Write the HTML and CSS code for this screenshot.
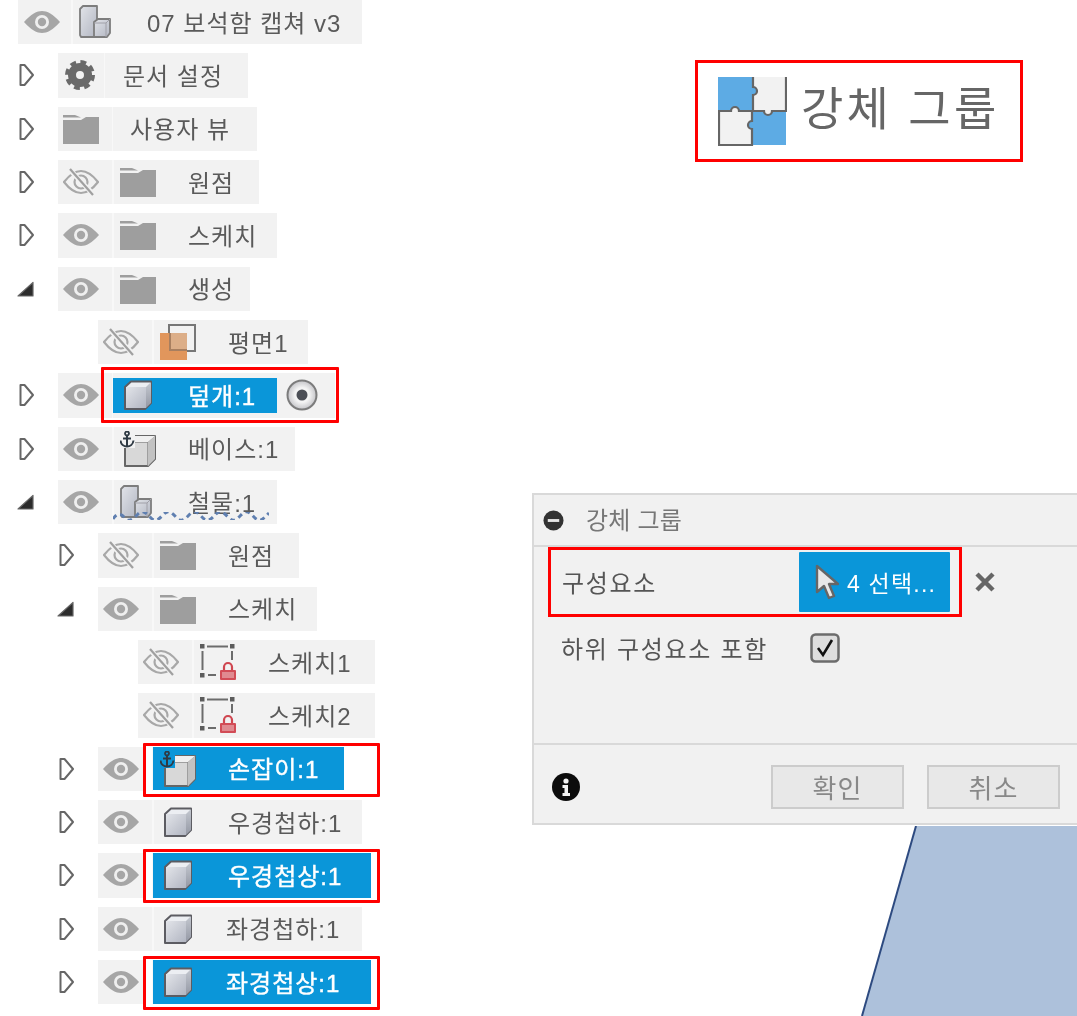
FILE: index.html
```html
<!DOCTYPE html>
<html lang="ko">
<head>
<meta charset="utf-8">
<title>강체 그룹</title>
<link rel="stylesheet" href="styles.css">
</head>
<body>
<svg class="defs" aria-hidden="true">
  <defs>
    <linearGradient id="gFront" x1="0" y1="0" x2="1" y2="1"><stop offset="0" stop-color="#e2e4e9"/><stop offset="1" stop-color="#b2b6c2"/></linearGradient>
    <linearGradient id="gSide" x1="0" y1="0" x2="0" y2="1"><stop offset="0" stop-color="#c4c8d0"/><stop offset="1" stop-color="#9498a4"/></linearGradient>
    <radialGradient id="gRadio"><stop offset="0.5" stop-color="#f4f4f4"/><stop offset="1" stop-color="#c4c4c8"/></radialGradient>
    <symbol id="eye" viewBox="0 0 36 22"><path d="M0 11C7 3 13 0 18 0s11 3 18 11C29 19 23 22 18 22S7 19 0 11Z" fill="#a6a6a6"/><circle cx="18" cy="11" r="7" fill="#efefef"/><circle cx="18" cy="11" r="4.200" fill="#a6a6a6"/></symbol>
    <symbol id="eyeoff" viewBox="0 0 36 28"><path d="M1 14C8 5 13 3 18 3s10 2 17 11C28 23 23 25 18 25S8 23 1 14Z" fill="none" stroke="#a8a8a8" stroke-width="2.200"/><circle cx="18" cy="14" r="6.500" fill="none" stroke="#a8a8a8" stroke-width="2.200"/><path d="M6 1 31 27" stroke="#f2f2f2" stroke-width="5"/><path d="M7 1 30 27" stroke="#a0a0a0" stroke-width="2.200"/></symbol>
    <symbol id="folder" viewBox="0 0 36 30"><path d="M0 1H12L18 3.500H0Z" fill="#9e9e9e"/><path d="M0 6H18L23 3H36V30H0Z" fill="#9e9e9e"/></symbol>
    <symbol id="gear" viewBox="0 0 30 30"><circle cx="15" cy="15" r="8" fill="none" stroke="#6a6a6a" stroke-width="8"/><circle cx="15" cy="15" r="12.500" fill="none" stroke="#6a6a6a" stroke-width="5" stroke-dasharray="5.600 4.220"/></symbol>
    <symbol id="cube" viewBox="0 0 30 30"><path d="M2 7 8 1.500H28V23L22 29H2Z" fill="#eceef2" stroke="#5c5c62" stroke-width="2" stroke-linejoin="round"/><path d="M23 7 28 2V23L23 28Z" fill="url(#gSide)"/><path d="M3 7H23V28H3Z" fill="url(#gFront)"/></symbol>
    <symbol id="anchorcube" viewBox="0 0 36 36"><path d="M5 10 11 5H35V28L28 35H5Z" fill="#d8d8d8" stroke="#666" stroke-width="2" stroke-linejoin="round"/><path d="M5 11H28L35 5M28 11V35" fill="none" stroke="#8c8c8c" stroke-width="1.500"/><path d="M11 5H35L28 11H5Z" fill="#f0f0f0"/><path d="M28 11 35 5V28L28 35Z" fill="#c2c2c2"/><rect class="anchorbg" x="0" y="0" width="15" height="17"/><circle cx="7" cy="2.500" r="2" fill="none" stroke="#2f3a44" stroke-width="1.800"/><path d="M7 4.500V15M3 7.500H11M0.500 9.500C1 13.500 4 15.500 7 15.500S13 13.500 13.500 9.500" fill="none" stroke="#2f3a44" stroke-width="2"/></symbol>
    <symbol id="bodies" viewBox="0 0 32 34"><path d="M1 4 4 1H18V32H2L1 30Z" fill="url(#gFront)" stroke="#7d7d7d" stroke-width="1.800" stroke-linejoin="round"/><path d="M15 17 19 14H31V28L28 32H15Z" fill="url(#gFront)" stroke="#7d7d7d" stroke-width="1.800" stroke-linejoin="round"/><path d="M15 18H27V32M27 18 31 14" fill="none" stroke="#a0a0a8" stroke-width="1"/></symbol>
    <symbol id="plane" viewBox="0 0 36 36"><path d="M9 9V1H35V27H27" fill="none" stroke="#777" stroke-width="2"/><rect x="0" y="9" width="27" height="27" fill="#e1965c"/><rect x="9" y="9" width="18" height="18" fill="#dcae88"/><path d="M10 9V26H27" fill="none" stroke="#a87f60" stroke-width="2"/></symbol>
    <symbol id="sketch" viewBox="0 0 36 36"><g fill="#5c5c5c"><rect x="0" y="0" width="4.500" height="4.500"/><rect x="30" y="0" width="4.500" height="4.500"/><rect x="0" y="29" width="4.500" height="4.500"/></g><path d="M7 2.500H28M2.500 7V26M32 7V16M8 31H16" stroke="#6c6c6c" stroke-width="2" fill="none"/><path d="M24 26V23a4 4 0 0 1 8 0V26" fill="none" stroke="#cf4650" stroke-width="2.200"/><rect x="20" y="26" width="16" height="10" rx="1" fill="#d24c56"/><rect x="22" y="28" width="12" height="6" fill="#e08a90"/></symbol>
    <symbol id="puzzle" viewBox="0 0 69 69"><rect x="0" y="0" width="68" height="68" fill="#f2f2f2"/><path d="M0 0H35V10a4 4 0 0 1 0 8V34H21a4 4 0 0 0-8 0H0Z" fill="#5dabe4"/><path d="M34 34H46a4 4 0 0 0 8 0H68V68H34V52a4 4 0 0 1 0-8Z" fill="#5dabe4"/><path d="M35 0V10a4 4 0 0 1 0 8V34H21a4 4 0 0 0-8 0H0M68 0V34H54a4 4 0 0 1-8 0H34V44a4 4 0 0 0 0 8V68H1V34" fill="none" stroke="#666" stroke-width="2.200"/></symbol>
    <symbol id="radio" viewBox="0 0 32 32"><circle cx="16" cy="16" r="14.500" fill="url(#gRadio)" stroke="#7c7c7c" stroke-width="2"/><circle cx="16" cy="16" r="5.500" fill="#4c4f56"/></symbol>
    <symbol id="closed" viewBox="0 0 16 24"><path d="M1.500 2H5.500L14 12 5.500 22H1.500Z" fill="#fff" stroke="#666" stroke-width="2" stroke-linejoin="round"/></symbol>
    <symbol id="open" viewBox="0 0 18 16"><path d="M1 15 16 1.500V15Z" fill="#2c2c2c" stroke="#666" stroke-width="1.200" stroke-linejoin="round"/></symbol>
    <symbol id="cursor" viewBox="0 0 24 36"><path d="M2 2V28L9 22 14 34 19 32 14 20H23Z" fill="#e8e8e8" stroke="#666" stroke-width="2.400" stroke-linejoin="round"/></symbol>
    <symbol id="cross" viewBox="0 0 22 20"><path d="M3 2 19 18M19 2 3 18" stroke="#666" stroke-width="4.500"/></symbol>
    <symbol id="minus" viewBox="0 0 22 22"><circle cx="11" cy="11" r="10.500" fill="#333"/><rect x="5" y="9.500" width="12" height="3" fill="#e8e8e8"/></symbol>
    <symbol id="info" viewBox="0 0 28 28"><circle cx="14" cy="14" r="14" fill="#0c0c0c"/><circle cx="14" cy="8" r="2.600" fill="#f2f2f2"/><path d="M10.500 12H16V20H18V23H10.500V20H12.500V15H10.500Z" fill="#f2f2f2"/></symbol>
    <symbol id="check" viewBox="0 0 30 30"><rect x="1.500" y="1.500" width="27" height="27" rx="4" fill="#dedede" stroke="#6c6c6c" stroke-width="2.500"/><path d="M8 15 13 22 22 7" fill="none" stroke="#111" stroke-width="2.600"/></symbol>
  </defs>
</svg>

<main class="page">
  <section class="tree">
    <div class="row">
      <div class="chip w-root"><span class="cell eye-cell root-eye"><svg class="i-eye"><use href="#eye"/></svg></span><span class="cell icon-cell"><svg class="i-body"><use href="#bodies"/></svg></span><span class="label">07 보석함 캡쳐 v3</span></div>
    </div>
    <div class="row">
      <span class="slot"><svg class="i-closed"><use href="#closed"/></svg></span>
      <div class="chip w-doc"><span class="cell gear-cell"><svg class="i-gear"><use href="#gear"/></svg></span><span class="label">문서 설정</span></div>
    </div>
    <div class="row">
      <span class="slot"><svg class="i-closed"><use href="#closed"/></svg></span>
      <div class="chip w-view"><span class="cell view-cell"><svg class="i-folder"><use href="#folder"/></svg></span><span class="label">사용자 뷰</span></div>
    </div>
    <div class="row">
      <span class="slot"><svg class="i-closed"><use href="#closed"/></svg></span>
      <div class="chip w-origin"><span class="cell eye-cell"><svg class="i-off"><use href="#eyeoff"/></svg></span><span class="cell icon-cell"><svg class="i-folder"><use href="#folder"/></svg></span><span class="label">원점</span></div>
    </div>
    <div class="row">
      <span class="slot"><svg class="i-closed"><use href="#closed"/></svg></span>
      <div class="chip w-sketch"><span class="cell eye-cell"><svg class="i-eye"><use href="#eye"/></svg></span><span class="cell icon-cell"><svg class="i-folder"><use href="#folder"/></svg></span><span class="label">스케치</span></div>
    </div>
    <div class="row">
      <span class="slot"><svg class="i-open"><use href="#open"/></svg></span>
      <div class="chip w-make"><span class="cell eye-cell"><svg class="i-eye"><use href="#eye"/></svg></span><span class="cell icon-cell"><svg class="i-folder"><use href="#folder"/></svg></span><span class="label">생성</span></div>
    </div>
    <div class="row l2">
      <span class="slot"></span>
      <div class="chip w-plane"><span class="cell eye-cell"><svg class="i-off"><use href="#eyeoff"/></svg></span><span class="cell icon-cell"><svg class="i-plane"><use href="#plane"/></svg></span><span class="label">평면1</span></div>
    </div>
    <div class="row">
      <span class="slot"><svg class="i-closed"><use href="#closed"/></svg></span>
      <div class="chip w-cover"><span class="cell eye-cell"><svg class="i-eye"><use href="#eye"/></svg></span><span class="sel sel-cover"><span class="cube-cell"><svg class="i-cube"><use href="#cube"/></svg></span><span class="label">덮개:1</span></span><svg class="i-radio"><use href="#radio"/></svg></div>
      <span class="mark mark-cover"></span>
    </div>
    <div class="row">
      <span class="slot"><svg class="i-closed"><use href="#closed"/></svg></span>
      <div class="chip w-base"><span class="cell eye-cell"><svg class="i-eye"><use href="#eye"/></svg></span><span class="cell icon-cell"><svg class="i-anchor"><use href="#anchorcube"/></svg></span><span class="label">베이스:1</span></div>
    </div>
    <div class="row">
      <span class="slot"><svg class="i-open"><use href="#open"/></svg></span>
      <div class="chip w-sketch"><span class="cell eye-cell"><svg class="i-eye"><use href="#eye"/></svg></span><span class="cell icon-cell"><svg class="i-body"><use href="#bodies"/></svg></span><span class="label">철물:1</span></div>
      <svg class="wave" viewBox="0 0 156 8"><path d="M0 7C4 1 8 1 12 6S20 7 25 2 33 1 38 6 46 7 51 2 59 1 64 6 72 7 77 2 85 1 90 6 98 7 103 2 111 1 116 6 124 7 129 2 137 1 142 6 150 7 156 1"/></svg>
    </div>
    <div class="row l1">
      <span class="slot"><svg class="i-closed"><use href="#closed"/></svg></span>
      <div class="chip w-origin"><span class="cell eye-cell"><svg class="i-off"><use href="#eyeoff"/></svg></span><span class="cell icon-cell"><svg class="i-folder"><use href="#folder"/></svg></span><span class="label">원점</span></div>
    </div>
    <div class="row l1">
      <span class="slot"><svg class="i-open"><use href="#open"/></svg></span>
      <div class="chip w-sketch"><span class="cell eye-cell"><svg class="i-eye"><use href="#eye"/></svg></span><span class="cell icon-cell"><svg class="i-folder"><use href="#folder"/></svg></span><span class="label">스케치</span></div>
    </div>
    <div class="row l3">
      <span class="slot"></span>
      <div class="chip w-sk1"><span class="cell eye-cell"><svg class="i-off"><use href="#eyeoff"/></svg></span><span class="cell icon-cell"><svg class="i-sketch"><use href="#sketch"/></svg></span><span class="label">스케치1</span></div>
    </div>
    <div class="row l3">
      <span class="slot"></span>
      <div class="chip w-sk1"><span class="cell eye-cell"><svg class="i-off"><use href="#eyeoff"/></svg></span><span class="cell icon-cell"><svg class="i-sketch"><use href="#sketch"/></svg></span><span class="label">스케치2</span></div>
    </div>
    <div class="row l1">
      <span class="slot"><svg class="i-closed"><use href="#closed"/></svg></span>
      <div class="chip w-stub"><span class="cell eye-cell"><svg class="i-eye"><use href="#eye"/></svg></span></div>
      <span class="sel sel-handle"><span class="cube-cell"><svg class="i-anchor on-blue"><use href="#anchorcube"/></svg></span><span class="label">손잡이:1</span></span>
      <span class="mark mark-item"></span>
    </div>
    <div class="row l1">
      <span class="slot"><svg class="i-closed"><use href="#closed"/></svg></span>
      <div class="chip w-hinge"><span class="cell eye-cell"><svg class="i-eye"><use href="#eye"/></svg></span><span class="cell icon-cell"><svg class="i-cube plain"><use href="#cube"/></svg></span><span class="label">우경첩하:1</span></div>
    </div>
    <div class="row l1">
      <span class="slot"><svg class="i-closed"><use href="#closed"/></svg></span>
      <div class="chip w-stub"><span class="cell eye-cell"><svg class="i-eye"><use href="#eye"/></svg></span></div>
      <span class="sel sel-hinge"><span class="cube-cell"><svg class="i-cube"><use href="#cube"/></svg></span><span class="label">우경첩상:1</span></span>
      <span class="mark mark-item"></span>
    </div>
    <div class="row l1">
      <span class="slot"><svg class="i-closed"><use href="#closed"/></svg></span>
      <div class="chip w-hinge"><span class="cell eye-cell"><svg class="i-eye"><use href="#eye"/></svg></span><span class="cell icon-cell"><svg class="i-cube plain"><use href="#cube"/></svg></span><span class="label tuck">좌경첩하:1</span></div>
    </div>
    <div class="row l1">
      <span class="slot"><svg class="i-closed"><use href="#closed"/></svg></span>
      <div class="chip w-stub"><span class="cell eye-cell"><svg class="i-eye"><use href="#eye"/></svg></span></div>
      <span class="sel sel-hinge"><span class="cube-cell"><svg class="i-cube"><use href="#cube"/></svg></span><span class="label tuck">좌경첩상:1</span></span>
      <span class="mark mark-item"></span>
    </div>
  </section>

  <section class="side">
    <div class="callout">
      <svg class="i-puzzle"><use href="#puzzle"/></svg>
      <span class="callout-text">강체 그룹</span>
    </div>

    <div class="panel">
      <header class="panel-head">
        <svg class="i-minus"><use href="#minus"/></svg>
        <span class="panel-title">강체 그룹</span>
      </header>
      <div class="panel-body">
        <div class="field">
          <div class="pick">
            <span class="field-label">구성요소</span>
            <span class="pick-btn"><svg class="i-cursor"><use href="#cursor"/></svg><span>4 선택...</span></span>
          </div>
          <svg class="i-cross"><use href="#cross"/></svg>
        </div>
        <div class="option">
          <span class="field-label">하위 구성요소 포함</span>
          <svg class="i-check"><use href="#check"/></svg>
        </div>
      </div>
      <footer class="panel-foot">
        <svg class="i-info"><use href="#info"/></svg>
        <span class="btn">확인</span>
        <span class="btn">취소</span>
      </footer>
    </div>

    <svg class="shape" viewBox="0 0 545 192" preserveAspectRatio="none">
      <path class="shape-fill" d="M384 0H545V192H330Z"/>
      <path class="shape-edge" d="M384 0 330 192"/>
    </svg>
  </section>
</main>
</body>
</html>
```

FILE: styles.css
```css
* { box-sizing: border-box; }
html, body { margin: 0; padding: 0; background: #fff; }
body { overflow: hidden; }
.defs { position: absolute; width: 0; height: 0; }
svg { display: block; flex: none; }

.page {
  display: flex;
  width: 1077px;
  height: 1016px;
  overflow: hidden;
  filter: blur(0.4px);
  font-family: "Liberation Sans", "Noto Sans CJK KR", sans-serif;
  color: #555;
}

/* tree */
.tree {
  width: 532px;
  flex: none;
  padding-left: 18px;
  display: flex;
  flex-direction: column;
  gap: 9px;
}
.row { position: relative; display: flex; align-items: center; height: 44.33px; flex: none; }
.l1 { padding-left: 40px; }
.l2 { padding-left: 40px; }
.l3 { padding-left: 80px; }
.row .wave { position: absolute; left: 95px; top: 32px; width: 156px; height: 8px; }
.slot { width: 40px; flex: none; display: flex; align-items: center; padding-left: 1px; }
.chip { display: flex; align-items: center; height: 100%; background: #f2f2f2; flex: none; }
.cell { display: flex; align-items: center; height: 100%; flex: none; }
.eye-cell { width: 55px; padding-left: 5px; border-right: 1px solid #f8f8f8; }
.root-eye { width: 54px; padding-left: 6px; }
.icon-cell { width: 75px; padding-left: 6px; border-left: 1px solid #f8f8f8; }
.gear-cell { width: 47px; padding-left: 7px; border-right: 1px solid #f8f8f8; }
.view-cell { width: 55px; padding-left: 5px; border-right: 1px solid #f8f8f8; }
.view-cell + .label { margin-left: 17px; }
.gear-cell + .label { margin-left: 18px; }
.label { font-size: 24px; letter-spacing: 1px; white-space: nowrap; color: #5a5a5a; line-height: 1; margin-top: 3px; }
.tuck { margin-left: -2px; }

.w-root { width: 344px; }
.w-doc { width: 190px; }
.w-view { width: 199px; }
.w-origin { width: 201px; }
.w-sketch { width: 219px; }
.w-make { width: 192px; }
.w-plane { width: 210px; }
.w-cover { width: 277px; }
.w-base { width: 237px; }
.w-sk1 { width: 237px; }
.w-stub { width: 45px; }
.w-hinge { width: 264px; }

/* selected items */
.sel { display: flex; align-items: center; background: #0a96d9; flex: none; }
.sel .label { color: #fff; -webkit-text-stroke: 0.4px #fff; }
.cube-cell { width: 75px; flex: none; display: flex; align-items: center; padding-left: 10px; }
.sel-cover { width: 164px; height: 35px; }
.sel-handle { width: 191px; height: 43px; margin-left: 10px; }
.sel-hinge { width: 218px; height: 100%; margin-left: 10px; }
.sel-handle .cube-cell { padding-left: 7px; }
.i-radio { width: 32px; height: 32px; margin-left: 9px; }
.mark { position: absolute; border: 3px solid #f00; border-radius: 1px; pointer-events: none; }
.mark-cover { left: 83px; top: -6px; width: 238px; height: 56px; }
.mark-item { left: 125px; top: -4px; width: 237px; height: 54px; }

/* icons */
.i-eye { width: 36px; height: 22px; }
.i-off { width: 36px; height: 28px; }
.i-folder { width: 36px; height: 30px; }
.i-gear { width: 30px; height: 30px; }
.i-body { width: 32px; height: 34px; }
.i-cube { width: 30px; height: 30px; }
.i-cube.plain { margin-left: 3px; }
.i-anchor { --anchor-bg: #f2f2f2; width: 36px; height: 36px; }
.i-anchor.on-blue { --anchor-bg: #0a96d9; }
.anchorbg { fill: var(--anchor-bg); }
.i-plane { width: 36px; height: 36px; }
.i-sketch { width: 36px; height: 36px; }
.i-closed { width: 16px; height: 24px; }
.i-open { width: 18px; height: 16px; margin-left: -2px; }
.wave path { fill: none; stroke: #5f7fb0; stroke-width: 3; stroke-dasharray: 5 4; }

/* right side */
.side { flex: 1; min-width: 0; display: flex; flex-direction: column; padding-top: 60px; }
.callout {
  margin-left: 163px;
  width: 328px;
  height: 102px;
  border: 3px solid #f00;
  display: flex;
  align-items: center;
  padding-left: 20px;
  flex: none;
}
.i-puzzle { width: 69px; height: 69px; }
.callout-text { margin-left: 14px; margin-bottom: 5px; font-size: 46px; letter-spacing: 3.3px; color: #666; white-space: nowrap; line-height: 1; }

.panel {
  margin-top: 331px;
  height: 332px;
  flex: none;
  background: #f1f1f1;
  border: 2px solid #d9d9d9;
  border-right: 0;
  display: flex;
  flex-direction: column;
}
.panel-head { height: 52px; flex: none; display: flex; align-items: center; padding-left: 9px; border-bottom: 2px solid #d9d9d9; }
.i-minus { width: 21px; height: 21px; }
.panel-title { margin-left: 22px; margin-top: 2px; font-size: 24px; letter-spacing: 0.2px; color: #777; line-height: 1; }
.panel-body { flex: 1; min-height: 0; padding-left: 14px; border-bottom: 2px solid #d9d9d9; }
.field { display: flex; align-items: center; }
.pick {
  width: 414px;
  height: 70px;
  border: 3px solid #f00;
  display: flex;
  align-items: center;
  justify-content: space-between;
  padding-left: 11px;
  padding-right: 9px;
}
.field-label { font-size: 24px; letter-spacing: 1.7px; color: #555; white-space: nowrap; line-height: 1; margin-top: 3px; }
.pick-btn { width: 151px; height: 60px; background: #0a96d9; border-radius: 1px; display: flex; align-items: center; padding-left: 16px; color: #fff; font-size: 23px; letter-spacing: 1.2px; white-space: nowrap; }
.i-cursor { width: 24px; height: 36px; margin-right: 8px; }
.i-cross { width: 22px; height: 20px; margin-left: 12px; }
.option { display: flex; align-items: center; height: 30px; margin-top: 16px; padding-left: 13px; }
.option .field-label { width: 249px; flex: none; }
.i-check { width: 30px; height: 30px; }
.panel-foot { height: 78px; flex: none; display: flex; align-items: center; padding-left: 18px; padding-top: 5px; }
.i-info { width: 28px; height: 28px; margin-right: 191px; }
.btn {
  width: 133px;
  height: 44px;
  background: #e8e8e8;
  border: 2px solid #ccc;
  display: flex;
  align-items: center;
  justify-content: center;
  font-size: 26px;
  letter-spacing: 1px;
  color: #888;
  margin-right: 23px;
  flex: none;
}
.shape { flex: 1; min-height: 0; width: 100%; margin-top: 1px; }
.shape-fill { fill: #adc1db; }
.shape-edge { fill: none; stroke: #2d4a80; stroke-width: 2; }
```
